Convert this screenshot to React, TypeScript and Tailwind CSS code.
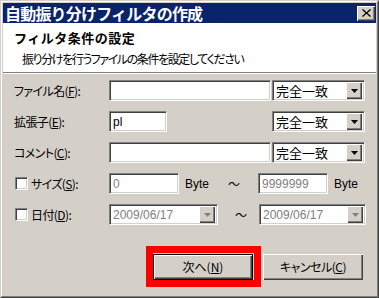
import React from "react";

const jp = "font-['MS_UI_Gothic','Noto_Sans_CJK_JP',sans-serif]";
const palt = "[font-feature-settings:'palt']";

const sunken =
  "border border-t-[#808080] border-l-[#808080] border-b-white border-r-white shadow-[inset_1px_1px_0_#404040,inset_-1px_-1px_0_#d4d0c8]";
const raised =
  "shadow-[inset_1px_1px_0_#ffffff,inset_-1px_-1px_0_#404040,inset_-2px_-2px_0_#808080]";

function Arrow({ disabled }: { disabled?: boolean }) {
  return (
    <div className={`w-[16px] h-[17px] bg-[#d4d0c8] ${raised} flex items-center justify-center`}>
      <svg width="7" height="4" viewBox="0 0 7 4">
        <polygon points="0,0 7,0 3.5,4" fill={disabled ? "#808080" : "#000"} />
      </svg>
    </div>
  );
}

function Combo({ text, w, disabled }: { text: string; w: string; disabled?: boolean }) {
  return (
    <div className={`${w} h-[21px] bg-white ${sunken} flex items-center pl-[3px] pr-[2px]`}>
      <span className={`flex-1 ${disabled ? "text-[12px] leading-[14px] text-[#808080] font-['Liberation_Sans',sans-serif]" : `text-[13px] leading-[15px] text-black ${jp}`}`}>
        {text}
      </span>
      <Arrow disabled={disabled} />
    </div>
  );
}

function Input({ w, text, disabled }: { w: string; text?: string; disabled?: boolean }) {
  return (
    <div className={`${w} h-[21px] bg-white ${sunken} flex items-center pl-[3px]`}>
      <span className={`text-[12px] leading-[14px] font-['Liberation_Sans',sans-serif] ${disabled ? "text-[#808080]" : "text-black"}`}>
        {text}
      </span>
    </div>
  );
}

function Check() {
  return <div className={`w-[13px] h-[13px] bg-white ${sunken}`} />;
}

function Label({ children, w }: { children: React.ReactNode; w: string }) {
  return (
    <div className={`${w} text-[12px] leading-[14px] tracking-[-0.6px] text-black ${jp} ${palt}`}>{children}</div>
  );
}

export default function App() {
  return (
    <div className="w-[379px] h-[298px] bg-[#d4d0c8] border border-t-[#d4d0c8] border-l-[#d4d0c8] border-r-[#404040] border-b-[#404040]">
      <div className="w-full h-full border border-t-white border-l-white border-r-[#808080] border-b-[#808080] p-[1px] flex flex-col">
        {/* title bar */}
        <div className="h-[20px] bg-[#0a246a] flex items-center justify-between pl-[2px] pr-[1px]">
          <span className={`text-white text-[16px] leading-[20px] tracking-[-0.8px] font-bold ${jp}`}>自動振り分けフィルタの作成</span>
          <div className={`w-[18px] h-[15px] bg-[#d4d0c8] ${raised} flex items-center justify-center`}>
            <svg width="9" height="8" viewBox="0 0 9 8">
              <path d="M1 0 L4.5 3.2 L8 0 L9 1 L5.5 4 L9 7 L8 8 L4.5 4.8 L1 8 L0 7 L3.5 4 L0 1 Z" fill="#000" />
            </svg>
          </div>
        </div>
        {/* header */}
        <div className="h-[50px] bg-white border-b border-b-[#808080] flex flex-col">
          <div className={`pl-[11px] pt-[6px] text-[13px] leading-[18px] tracking-[0.5px] font-bold text-black ${jp}`}>
            フィルタ条件の設定
          </div>
          <div className={`pl-[19px] mt-[5px] text-[12px] leading-[14px] tracking-[-1.4px] text-black ${jp} ${palt}`}>
            振り分けを行うファイルの条件を設定してください
          </div>
        </div>
        <div className="h-px bg-white" />
        {/* body */}
        <div className="flex flex-col gap-[10px] pt-[6px] pl-[11px]">
          <div className="flex items-center h-[21px]">
            <Label w="w-[95px]">
              ファイル名(<u>F</u>):
            </Label>
            <Input w="w-[162px]" />
            <div className="w-[1px]" />
            <Combo w="w-[93px]" text="完全一致" />
          </div>
          <div className="flex items-center h-[21px]">
            <Label w="w-[95px]">
              拡張子(<u>E</u>):
            </Label>
            <Input w="w-[58px]" text="pl" />
            <div className="w-[105px]" />
            <Combo w="w-[93px]" text="完全一致" />
          </div>
          <div className="flex items-center h-[21px]">
            <Label w="w-[95px]">
              コメント(<u>C</u>):
            </Label>
            <Input w="w-[162px]" />
            <div className="w-[1px]" />
            <Combo w="w-[93px]" text="完全一致" />
          </div>
          <div className="flex items-center h-[21px]">
            <div className="w-[17px] pl-[1px]">
              <Check />
            </div>
            <Label w="w-[78px]">
              サイズ(<u>S</u>):
            </Label>
            <Input w="w-[70px]" text="0" disabled />
            <span className="ml-[6px] w-[43px] text-[12px] leading-[14px] text-black font-['Liberation_Sans',sans-serif]">Byte</span>
            <span className={`w-[30px] text-[12px] leading-[14px] text-black ${jp}`}>～</span>
            <Input w="w-[70px]" text="9999999" disabled />
            <span className="ml-[6px] text-[12px] leading-[14px] text-black font-['Liberation_Sans',sans-serif]">Byte</span>
          </div>
          <div className="flex items-center h-[21px]">
            <div className="w-[17px] pl-[1px]">
              <Check />
            </div>
            <Label w="w-[78px]">
              日付(<u>D</u>):
            </Label>
            <Combo w="w-[109px]" text="2009/06/17" disabled />
            <span className={`pl-[17px] w-[41px] text-[12px] leading-[14px] text-black ${jp}`}>～</span>
            <Combo w="w-[107px]" text="2009/06/17" disabled />
          </div>
        </div>
        {/* buttons */}
        <div className="flex items-start pl-[143px] mt-[21px]">
          <div className="border-[7px] border-[#ff0000] pt-[1px] pr-[1px]">
            <div className={`w-[100px] h-[26px] bg-[#d4d0c8] ${raised} border border-black flex items-center justify-center text-[12px] leading-[14px] text-black ${jp}`}>
              次へ(<u>N</u>)
            </div>
          </div>
          <div className={`ml-[2px] mt-[8px] w-[100px] h-[26px] bg-[#d4d0c8] ${raised} flex items-center justify-center text-[12px] leading-[14px] tracking-[-0.5px] text-black ${jp} ${palt}`}>
            キャンセル(<u>C</u>)
          </div>
        </div>
      </div>
    </div>
  );
}
